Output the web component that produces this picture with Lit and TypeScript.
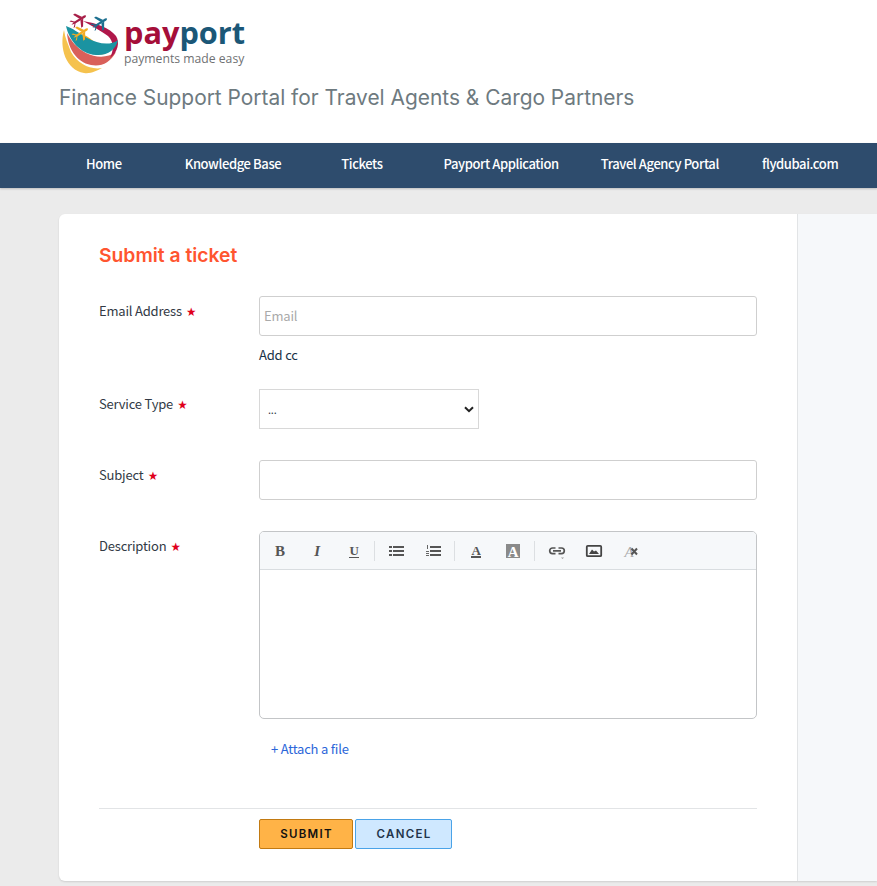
import { LitElement, html, css, svg } from "lit";
import { customElement } from "lit/decorators.js";

const tb = (inner: unknown) => html`<span class="tool"><svg width="18" height="18" viewBox="0 0 18 18">${inner}</svg></span>`;
const plane = (x: number, y: number, c: string) => svg`<g transform="translate(${x} ${y}) rotate(-32) scale(1.100)">
  <path d="M-8 0 L-5 -0.900 L6 -1.100 Q9 0 6 1.100 L-5 0.900Z" fill="${c}"/>
  <path d="M1 -0.800 L-2 -7 L0 -7 L4 -0.800ZM1 0.800 L-2 7 L0 7 L4 0.800Z" fill="${c}"/>
  <path d="M-5 -0.500 L-8 -3.500 L-6.500 -3.500 L-4 -0.500ZM-5 0.500 L-8 3.500 L-6.500 3.500 L-4 0.500Z" fill="${c}"/></g>`;

@customElement("app-root")
export class AppRoot extends LitElement {
  static styles = css`
    :host { display: block; height: 886px; overflow: hidden; background: #ebebeb; font-family: "Noto Sans CJK SC", Lato, sans-serif; color: #323a45; font-size: 13px; letter-spacing: -.2px; }
    .head { background: #fff; height: 143px; padding-left: 59px; box-sizing: border-box; letter-spacing: 0; }
    .logo { display: flex; height: 74px; padding-top: 8px; box-sizing: border-box; }
    .logo svg { flex: none; }
    .logotext { display: flex; flex-direction: column; margin: 7px 0 0 0; }
    .pay { font: 700 30.700px/34px "Open Sans", sans-serif; color: #a50e39; }
    .pay b { color: #1b5777; font-weight: 700; }
    .tag { font: 12.200px/14px "Open Sans", sans-serif; color: #6f7173; margin-top: 3px; }
    .tagline { font: 400 20.900px/26px Inter, sans-serif; color: #6e7a7f; margin-top: 11px; }
    nav { background: #2e4c6d; height: 45px; display: flex; align-items: center; color: #fff; font-size: 13px; letter-spacing: -.4px; font-weight: 500; line-height: 18px; padding-bottom: 3px; box-sizing: border-box; box-shadow: 0 1px 2px rgba(0,0,0,.2); }
    .navin { display: flex; padding-left: 86px; }
    nav a { white-space: nowrap; }
    .card { margin: 26px 0 0 59px; width: 818px; height: 667px; background: #fff; border-radius: 6px 0 0 6px; box-shadow: 0 1px 2px rgba(0,0,0,.12); display: grid; grid-template-columns: 739px 1fr; }
    .main { padding: 29px 40px 0; border-right: 1px solid #e2e4e6; box-sizing: border-box; }
    .side { background: #f6f8fa; }
    h1 { margin: 0; font: 600 19.300px/24px Inter, sans-serif; letter-spacing: 0; color: #ff5530; }
    .row { display: grid; grid-template-columns: 160px 498px; }
    label { padding-top: 6px; line-height: 18px; }
    .star { color: #e0001b; margin-left: 2px; font-size: 9.500px; vertical-align: 1px; }
    .box { height: 40px; border: 1px solid #cfcfcf; border-radius: 3px; box-sizing: border-box; display: flex; align-items: center; padding-left: 4px; background: #fff; line-height: 18px; }
    .ph { color: #aaa; }
    .cc { margin-top: 10px; line-height: 18px; color: #183247; }
    .select { width: 220px; border-radius: 0; justify-content: space-between; padding: 0 4px 0 8px; border-color: #d8d8d8; font-size: 11px; }
    .editor { height: 188px; border: 1px solid #c3c5c7; border-radius: 5px; box-sizing: border-box; overflow: hidden; }
    .toolbar { height: 38px; background: #f6f8fa; border-bottom: 1px solid #d9dde0; display: flex; align-items: center; padding-left: 1px; box-sizing: border-box; }
    .tool { display: flex; justify-content: center; align-items: center; flex: none; width: 37px; height: 20px; }
    .tool svg { display: block; }
    .sep { width: 1px; height: 20px; background: #dcdfe2; flex: none; margin: 0 2.250px; }
    .sep.wide { margin: 0 3px; }
    .attach { margin: 21px 0 0 12px; color: #2b66d9; line-height: 18px; }
    hr { border: 0; border-top: 1px solid #e2e4e6; margin: 0; }
    .btns { display: flex; gap: 2px; margin: 10px 0 0 160px; }
    button { height: 30px; border-radius: 2px; font: 600 11.500px/1 Inter, sans-serif; letter-spacing: 1.300px; box-sizing: border-box; padding: 1px 0 0 1px; }
    .ok { width: 94px; background: #ffb347; border: 1px solid #c27a12; color: #111; }
    .no { width: 97px; background: #cfe8ff; border: 1px solid #4aa3e8; color: #22344a; }
  `;

  render() {
    const navs = ["Home", "Knowledge Base", "Tickets", "Payport Application", "Travel Agency Portal", "flydubai.com"];
    const gaps = [0, 63, 60, 61, 42, 43];
    return html`
      <div class="head">
        <div class="logo">
          <svg width="65" height="66" viewBox="1 0 65 66">
            <path d="M6 22 C1 40 8 62 26 65 C33 66 38 63 44 60 C32 62 20 56 13 44 C10 36 7 30 6 22Z" fill="#f5c24e"/>
            <path d="M9 25 C10 40 18 54 33 57 C43 59 52 55 58 44 C50 50 38 50 28 45 C19 40 13 33 9 25Z" fill="#d9605a"/>
            <path d="M22 25 C32 29 40 36 47 46 L38 47 C34 38 29 32 22 25Z" fill="#f2ad25"/>
            <path d="M25 13 C38 15 52 20 58 28 C62 34 60 44 52 50 C56 42 56 34 50 28 C43 23 34 18 25 13Z" fill="#b0174a"/>
            <path d="M8 18 C11 32 22 46 38 47 C49 48 58 42 60 32 C52 38 40 36 29 30 C21 25 14 20 8 18Z" fill="#1b93a1"/>
            ${plane(21, 12, "#a81f48")}${plane(42, 15, "#1c6f8f")}${plane(23, 25, "#f2ad25")}
          </svg>
          <div class="logotext"><div class="pay">pay<b>port</b></div><div class="tag">payments made easy</div></div>
        </div>
        <div class="tagline">Finance Support Portal for Travel Agents &amp; Cargo Partners</div>
      </div>
      <nav><div class="navin">
        ${navs.map((t, i) => html`<a style="margin-left:${gaps[i]}px">${t}</a>`)}
      </div></nav>
      <div class="card">
        <div class="main">
          <h1>Submit a ticket</h1>
          <div class="row" style="margin-top:29px"><label>Email Address <span class="star">★</span></label>
            <div><div class="box"><span class="ph">Email</span></div><div class="cc">Add cc</div></div></div>
          <div class="row" style="margin-top:25px"><label>Service Type <span class="star">★</span></label>
            <div class="box select"><span>...</span><svg width="10" height="7" viewBox="0 0 10 7"><path d="M1 1.200 L5 5.200 L9 1.200" fill="none" stroke="#222" stroke-width="2"/></svg></div></div>
          <div class="row" style="margin-top:31px"><label>Subject <span class="star">★</span></label><div class="box"></div></div>
          <div class="row" style="margin-top:31px"><label>Description <span class="star">★</span></label>
            <div>
              <div class="editor"><div class="toolbar">
                ${tb(svg`<text x="9" y="14" text-anchor="middle" font-family="Liberation Serif" font-weight="700" font-size="15" fill="#555">B</text>`)}
                ${tb(svg`<text x="9" y="14" text-anchor="middle" font-family="Liberation Serif" font-style="italic" font-weight="700" font-size="15" fill="#555">I</text>`)}
                ${tb(svg`<text x="9" y="13" text-anchor="middle" font-family="Liberation Serif" font-weight="700" font-size="13" fill="#555">U</text><rect x="4" y="15" width="10" height="1" fill="#555"/>`)}
                <span class="sep"></span>
                ${tb(svg`<path d="M2 4h3v2H2zM2 8h3v2H2zM2 12h3v2H2zM6 4h11v2H6zM6 8h11v2H6zM6 12h11v2H6z" fill="#555"/>`)}
                ${tb(svg`<path d="M6 4h11v2H6zM6 8h11v2H6zM6 12h11v2H6z" fill="#555"/><path d="M3 3h1v4H3zM2 9h3v1H2zM2 11h3v1H2zM2 13h3v1H2z" fill="#666"/>`)}
                <span class="sep"></span>
                ${tb(svg`<text x="9" y="13" text-anchor="middle" font-family="Liberation Serif" font-weight="700" font-size="13" fill="#555">A</text><rect x="4" y="14" width="10" height="2" fill="#555"/>`)}
                ${tb(svg`<rect x="2" y="2" width="14" height="14" fill="#8a8a8a"/><text x="9" y="14.500" text-anchor="middle" font-family="Liberation Serif" font-weight="700" font-size="15" fill="#fff">A</text>`)}
                <span class="sep wide"></span>
                ${tb(svg`<path d="M7.500 6H4.500a2.800 2.800 0 0 0 0 5.600H7.500M10.500 6h3a2.800 2.800 0 0 1 0 5.600h-3M5 8.800h8" fill="none" stroke="#555" stroke-width="1.700"/><path d="M13 15.500h3l-1.500 1.500z" fill="#999"/>`)}
                ${tb(svg`<rect x="1.800" y="3.800" width="14.400" height="10.400" rx="1" fill="none" stroke="#444" stroke-width="1.800"/><path d="M4 12 L7 7.500 L9 9.500 L11 8.500 L14 12Z" fill="#444"/>`)}
                ${tb(svg`<text x="7" y="14.500" text-anchor="middle" font-family="Liberation Serif" font-style="italic" font-size="15" fill="#aaa">A</text><path d="M9.500 6.500l5.500 6M15 6.500l-5.500 6" stroke="#555" stroke-width="2"/>`)}
              </div></div>
              <div class="attach">+ Attach a file</div>
            </div></div>
          <hr style="margin-top:50px"/>
          <div class="btns"><button class="ok">SUBMIT</button><button class="no">CANCEL</button></div>
        </div>
        <div class="side"></div>
      </div>`;
  }
}
